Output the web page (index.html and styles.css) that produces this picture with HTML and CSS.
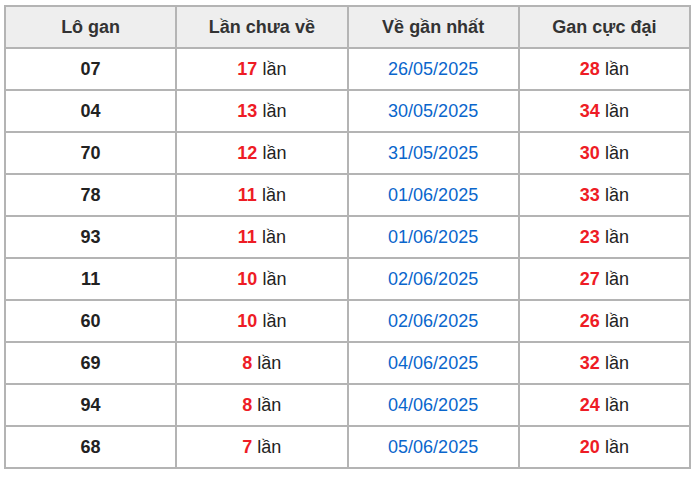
FILE: index.html
```html
<!DOCTYPE html>
<html lang="vi">
<head>
<meta charset="utf-8">
<link rel="stylesheet" href="styles.css">
</head>
<body>
<table class="gan">
  <thead>
    <tr><th>Lô gan</th><th>Lần chưa về</th><th>Về gần nhất</th><th>Gan cực đại</th></tr>
  </thead>
  <tbody>
    <tr><td class="lo">07</td><td><b>17</b> lần</td><td class="date">26/05/2025</td><td><b>28</b> lần</td></tr>
    <tr><td class="lo">04</td><td><b>13</b> lần</td><td class="date">30/05/2025</td><td><b>34</b> lần</td></tr>
    <tr><td class="lo">70</td><td><b>12</b> lần</td><td class="date">31/05/2025</td><td><b>30</b> lần</td></tr>
    <tr><td class="lo">78</td><td><b>11</b> lần</td><td class="date">01/06/2025</td><td><b>33</b> lần</td></tr>
    <tr><td class="lo">93</td><td><b>11</b> lần</td><td class="date">01/06/2025</td><td><b>23</b> lần</td></tr>
    <tr><td class="lo">11</td><td><b>10</b> lần</td><td class="date">02/06/2025</td><td><b>27</b> lần</td></tr>
    <tr><td class="lo">60</td><td><b>10</b> lần</td><td class="date">02/06/2025</td><td><b>26</b> lần</td></tr>
    <tr><td class="lo">69</td><td><b>8</b> lần</td><td class="date">04/06/2025</td><td><b>32</b> lần</td></tr>
    <tr><td class="lo">94</td><td><b>8</b> lần</td><td class="date">04/06/2025</td><td><b>24</b> lần</td></tr>
    <tr><td class="lo">68</td><td><b>7</b> lần</td><td class="date">05/06/2025</td><td><b>20</b> lần</td></tr>
  </tbody>
</table>
</body>
</html>
```
FILE: styles.css
```css
html, body {
  margin: 0;
  padding: 0;
  background: #ffffff;
}
body {
  padding: 5px 0 0 4px;
  font-family: "Liberation Sans", Arial, sans-serif;
  font-size: 18px;
  color: #222222;
}
.gan {
  border-collapse: collapse;
  width: 687px;
  table-layout: fixed;
  border: 2px solid #b4b4b4;
}
.gan th, .gan td {
  border: 2px solid #b4b4b4;
  height: 40px;
  padding: 0;
  text-align: center;
  vertical-align: middle;
}
.gan th {
  background: #eeeeee;
  font-weight: bold;
  color: #333333;
}
.gan td b {
  color: #ee1c25;
  font-weight: bold;
}
.gan td.lo {
  font-weight: bold;
  color: #222222;
}
.gan td.date {
  color: #0a66cc;
}
```
